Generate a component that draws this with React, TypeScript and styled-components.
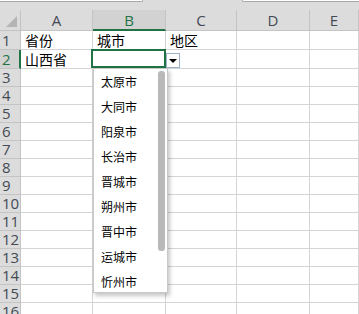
import { Fragment } from "react";
import styled, { createGlobalStyle } from "styled-components";

const GlobalStyle = createGlobalStyle`
  html, body {
    margin: 0;
    padding: 0;
    background: #ffffff;
    overflow: hidden;
  }
`;

const COLS = ["A", "B", "C", "D", "E"];
const COL_WIDTHS = [72, 73, 71, 73, 49];
const ROW_COUNT = 16;
const rowHeight = (r: number) => (r <= 2 ? 19 : 18);

const cellText: Record<string, string> = {
  A1: "省份",
  B1: "城市",
  C1: "地区",
  A2: "山西省",
};

const cities = [
  "太原市",
  "大同市",
  "阳泉市",
  "长治市",
  "晋城市",
  "朔州市",
  "晋中市",
  "运城市",
  "忻州市",
];

const Wrapper = styled.div`
  position: relative;
  width: 359px;
  height: 314px;
  overflow: hidden;
  background: #ffffff;
  font-family: "Noto Sans CJK SC", "Noto Sans", sans-serif;
`;

const TopStrip = styled.div`
  height: 10px;
  background: #dcdcdc;
  display: flex;
  justify-content: space-between;
  align-items: flex-start;
`;

const NameBoxEdge = styled.div`
  width: 142px;
  height: 1px;
  background: #ffffff;
  border-bottom: 1px solid #a8a8a8;
  border-right: 1px solid #a8a8a8;
  border-bottom-right-radius: 3px;
`;

const FormulaEdge = styled.div`
  width: 116px;
  height: 1px;
  background: #ffffff;
  border-bottom: 1px solid #a8a8a8;
  border-left: 1px solid #a8a8a8;
  border-bottom-left-radius: 3px;
`;

const Grid = styled.div`
  display: grid;
  grid-template-columns: 21px ${COL_WIDTHS.map((w) => `${w}px`).join(" ")};
`;

const Corner = styled.div`
  position: relative;
  height: 21px;
  background: #dcdcdc;
  border-right: 1px solid #c4c4c4;
  border-bottom: 1px solid #c4c4c4;
  box-sizing: border-box;

  &::after {
    content: "";
    position: absolute;
    right: 3px;
    bottom: 3px;
    border-style: solid;
    border-width: 0 0 11px 11px;
    border-color: transparent transparent #b4b4b4 transparent;
  }
`;

const ColHeader = styled.div<{ $active?: boolean }>`
  height: 21px;
  box-sizing: border-box;
  display: flex;
  align-items: center;
  justify-content: center;
  background: ${(p) => (p.$active ? "#d2d2d2" : "#dcdcdc")};
  border-right: 1px solid #c4c4c4;
  border-bottom: ${(p) => (p.$active ? "2px solid #217346" : "1px solid #c4c4c4")};
  color: ${(p) => (p.$active ? "#217346" : "#444a54")};
  font-family: "Open Sans", "Liberation Sans", sans-serif;
  font-size: 15px;
  padding-top: ${(p) => (p.$active ? "1px" : "0")};
`;

const RowHeader = styled.div<{ $active?: boolean; $h: number }>`
  height: ${(p) => p.$h}px;
  box-sizing: border-box;
  display: flex;
  align-items: center;
  padding-left: 2px;
  background: ${(p) => (p.$active ? "#d2d2d2" : "#dcdcdc")};
  border-right: ${(p) => (p.$active ? "2px solid #217346" : "1px solid #c4c4c4")};
  border-bottom: 1px solid #c4c4c4;
  color: ${(p) => (p.$active ? "#217346" : "#444a54")};
  font-family: "Open Sans", "Liberation Sans", sans-serif;
  font-size: 15px;
  line-height: 1;
`;

const Cell = styled.div<{ $h: number }>`
  position: relative;
  height: ${(p) => p.$h}px;
  box-sizing: border-box;
  display: flex;
  align-items: center;
  padding-left: 4px;
  border-right: 1px solid #d4d4d4;
  border-bottom: 1px solid #d4d4d4;
  color: #000000;
  font-size: 14px;
  white-space: nowrap;
`;

const ActiveBox = styled.div`
  position: absolute;
  left: -2px;
  top: -1px;
  right: -1px;
  bottom: 0;
  border: 2px solid #217346;
  pointer-events: none;
  z-index: 2;
`;

const DropButton = styled.div`
  position: absolute;
  left: 166px;
  top: 53px;
  width: 14px;
  height: 15px;
  box-sizing: border-box;
  background: #ffffff;
  border: 1px solid #9fb3c8;
  display: flex;
  align-items: center;
  justify-content: center;
  z-index: 3;

  &::after {
    content: "";
    border-style: solid;
    border-width: 4px 4px 0 4px;
    border-color: #000000 transparent transparent transparent;
  }
`;

const DropList = styled.div`
  position: absolute;
  left: 93px;
  top: 68px;
  width: 75px;
  height: 225px;
  box-sizing: border-box;
  background: #ffffff;
  border: 1px solid #c8c8c8;
  box-shadow: 2px 3px 4px rgba(0, 0, 0, 0.22);
  z-index: 4;
`;

const ListItem = styled.div`
  height: 25px;
  display: flex;
  align-items: center;
  padding-left: 7px;
  font-size: 12px;
  color: #000000;
`;

const Thumb = styled.div`
  position: absolute;
  right: 2px;
  top: 2px;
  width: 7px;
  height: 180px;
  background: #b9b9b9;
  border-radius: 3px;
`;

export default function App() {
  const rows = Array.from({ length: ROW_COUNT }, (_, i) => i + 1);
  return (
    <Wrapper>
      <GlobalStyle />
      <TopStrip>
        <NameBoxEdge />
        <FormulaEdge />
      </TopStrip>
      <Grid>
        <Corner />
        {COLS.map((c) => (
          <ColHeader key={c} $active={c === "B"}>
            {c}
          </ColHeader>
        ))}
        {rows.map((r) => (
          <Fragment key={r}>
            <RowHeader $active={r === 2} $h={rowHeight(r)}>
              {r}
            </RowHeader>
            {COLS.map((c) => (
              <Cell key={`${c}${r}`} $h={rowHeight(r)}>
                {cellText[`${c}${r}`]}
                {c === "B" && r === 2 && <ActiveBox />}
              </Cell>
            ))}
          </Fragment>
        ))}
      </Grid>
      <DropButton />
      <DropList>
        {cities.map((city) => (
          <ListItem key={city}>{city}</ListItem>
        ))}
        <Thumb />
      </DropList>
    </Wrapper>
  );
}
